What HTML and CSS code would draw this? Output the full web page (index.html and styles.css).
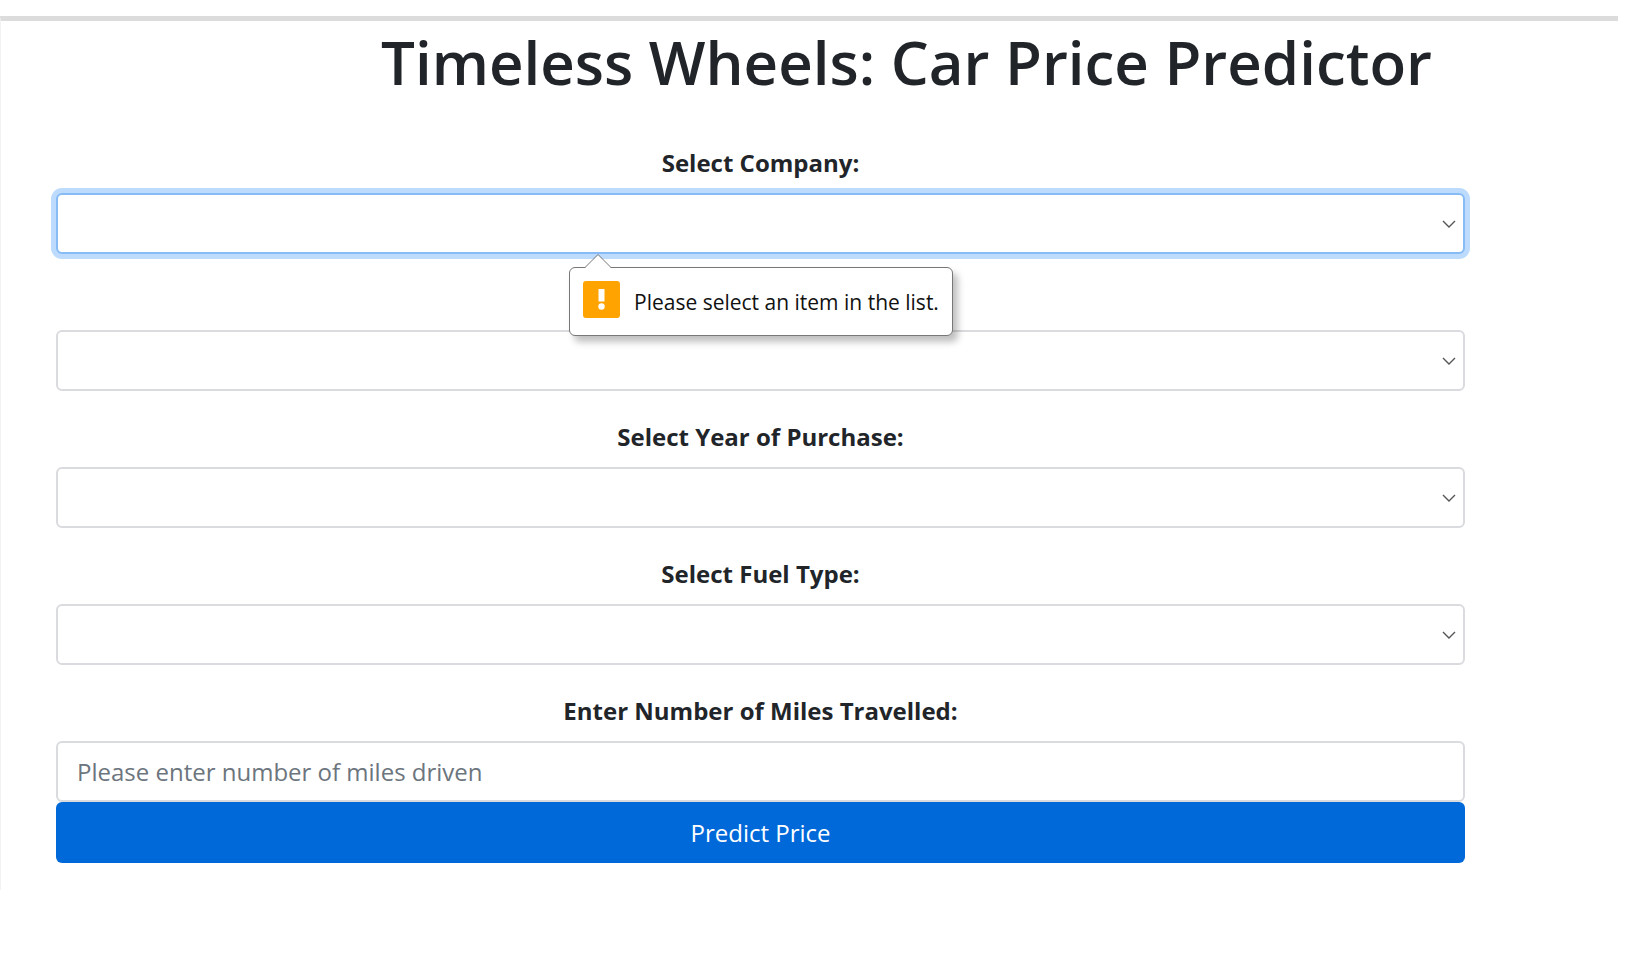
FILE: index.html
```html
<!DOCTYPE html>
<html lang="en">
<head>
<meta charset="utf-8">
<meta name="viewport" content="width=device-width, initial-scale=1">
<title>Timeless Wheels: Car Price Predictor</title>
<link rel="stylesheet" href="styles.css">
</head>
<body>
<main class="card">
  <h1 class="title">Timeless Wheels: Car Price Predictor</h1>
  <form class="form">
    <div class="group">
      <label class="label" for="company">Select Company:</label>
      <div class="control">
        <select class="field field-active" id="company" required></select>
        <svg class="chevron" viewBox="0 0 14 8" aria-hidden="true"><path d="M1 1l6 6 6-6"/></svg>
        <div class="tooltip" role="alert">
          <svg class="tooltip-arrow" viewBox="0 0 26 14" aria-hidden="true"><path class="arrow-fill" d="M0 14L13 1l13 13z"/><path class="arrow-line" d="M0 13.500L13 .5l13 13"/></svg>
          <svg class="tooltip-icon" viewBox="0 0 37 37" aria-hidden="true"><rect width="37" height="37" rx="3" fill="#ffa300"/><path d="M15.500 8h6v12.500h-6z" fill="#fff"/><circle cx="18.500" cy="25.500" r="3.200" fill="#fff"/></svg>
          <span>Please select an item in the list.</span>
        </div>
      </div>
    </div>
    <div class="group group-unlabelled">
      <div class="control">
        <select class="field" id="model" aria-label="Model"></select>
        <svg class="chevron" viewBox="0 0 14 8" aria-hidden="true"><path d="M1 1l6 6 6-6"/></svg>
      </div>
    </div>
    <div class="group">
      <label class="label" for="year">Select Year of Purchase:</label>
      <div class="control">
        <select class="field" id="year"></select>
        <svg class="chevron" viewBox="0 0 14 8" aria-hidden="true"><path d="M1 1l6 6 6-6"/></svg>
      </div>
    </div>
    <div class="group">
      <label class="label" for="fuel">Select Fuel Type:</label>
      <div class="control">
        <select class="field" id="fuel"></select>
        <svg class="chevron" viewBox="0 0 14 8" aria-hidden="true"><path d="M1 1l6 6 6-6"/></svg>
      </div>
    </div>
    <div class="group">
      <label class="label" for="miles">Enter Number of Miles Travelled:</label>
      <input class="field" id="miles" type="text" placeholder="Please enter number of miles driven">
    </div>
    <button class="submit" type="submit">Predict Price</button>
  </form>
</main>
</body>
</html>
```
FILE: styles.css
```css
* {
  box-sizing: border-box;
}

body {
  margin: 0;
  padding: 16px 32px 0 0;
  background: #fff;
  color: #212529;
  font-family: "Open Sans", "Noto Sans", sans-serif;
  font-size: 24px;
  line-height: 36px;
}

.card {
  padding: 0 153px 27px 55px;
  border-top: 5px solid #dcdcdc;
  border-left: 1px solid #f2f2f2;
  background: #fff;
}

.title {
  margin: 0 -153px 0 139px;
  padding: 2px 0 44px;
  font-size: 60px;
  font-weight: 600;
  line-height: 78px;
  text-align: center;
  white-space: nowrap;
}

.form {
  display: flex;
  flex-direction: column;
}

.group {
  display: flex;
  flex-direction: column;
  gap: 12px;
  margin-bottom: 28px;
}

.group-unlabelled {
  padding-top: 48px;
}

.group:last-of-type {
  margin-bottom: 0;
}

.label {
  font-weight: 700;
  text-align: center;
}

.control {
  position: relative;
}

.field {
  display: block;
  width: 100%;
  height: 61px;
  padding: 0 19px;
  border: 2px solid #d9dbde;
  border-radius: 6px;
  background: #fff;
  color: #495057;
  font: inherit;
  appearance: none;
}

.field::placeholder {
  color: #6c757d;
  opacity: 1;
}

.field-active {
  border-color: #86bbf5;
  box-shadow: 0 0 0 5px #bddcfd;
}

.chevron {
  position: absolute;
  top: 27px;
  right: 9px;
  width: 14px;
  height: 8px;
  fill: none;
  stroke: #555;
  stroke-width: 1.4;
}

.tooltip {
  position: absolute;
  z-index: 1;
  top: 74px;
  left: 513px;
  display: flex;
  align-items: flex-start;
  gap: 14px;
  height: 69px;
  padding: 13px;
  border: 1px solid #777;
  border-radius: 6px;
  background: #fff;
  box-shadow: 5px 6px 7px rgba(0, 0, 0, 0.25);
  color: #111;
  font-size: 21px;
  line-height: 42px;
  white-space: nowrap;
}

.tooltip-arrow {
  position: absolute;
  top: -14px;
  left: 15px;
  width: 26px;
  height: 14px;
}

.arrow-fill {
  fill: #fff;
}

.arrow-line {
  fill: none;
  stroke: #777;
}

.tooltip-icon {
  width: 37px;
  height: 37px;
}

.submit {
  height: 61px;
  border: 0;
  border-radius: 6px;
  background: #0069d9;
  color: #fff;
  font: inherit;
}
```
